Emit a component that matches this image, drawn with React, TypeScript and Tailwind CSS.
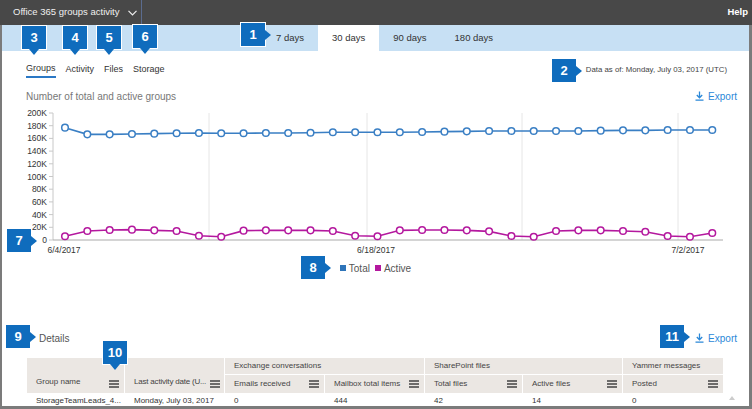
import React from 'react';

const total = [176.9, 166.4, 166.4, 166.9, 167.5, 168, 168.5, 168, 168, 168.5, 168.5, 169, 169.6, 169.6, 169.6, 169.6, 170.1, 170.6, 171.1, 171.7, 171.7, 171.7, 171.7, 171.7, 172.2, 172.7, 172.7, 173.2, 173.2, 173.2];
const active = [5.8, 14.2, 15.7, 16.3, 15.2, 14.2, 6.8, 5.2, 14.7, 15.2, 15.2, 15.2, 14.2, 6.8, 5.8, 15.2, 15.7, 15.7, 15.2, 13.6, 6.3, 5.2, 14.2, 15.2, 15.2, 14.2, 13.1, 6.3, 5.2, 11.0];

const xAt = (i: number) => 65 + i * 22.32;
const yAt = (v: number) => 240 - v * 0.635;

// numbered callout boxes laid over the screenshot
function Callout({ n, left, top, dir }: { n: number; left: number; top: number; dir: 'right' | 'down' }) {
  return (
    <div
      className="absolute w-[26px] h-[25px] bg-[#0f6cbd] border border-white flex items-center justify-center text-white text-[13px] font-semibold"
      style={{ left, top }}
    >
      {n}
      {dir === 'right' ? (
        <div className="absolute right-[-6px] top-1/2 -translate-y-1/2 w-0 h-0 border-y-[5px] border-y-transparent border-l-[6px] border-l-[#0f6cbd]" />
      ) : (
        <div className="absolute bottom-[-6px] left-1/2 -translate-x-1/2 w-0 h-0 border-x-[5px] border-x-transparent border-t-[6px] border-t-[#0f6cbd]" />
      )}
    </div>
  );
}

function ExportLink() {
  return (
    <div className="flex items-center gap-[4px] text-[#2b88d8] text-[10px]">
      <svg width="9" height="10" viewBox="0 0 9 10">
        <path d="M4.5 0.5 V6.5 M1.8 4 L4.5 6.8 L7.2 4 M0.5 9.2 H8.5" stroke="#2b88d8" strokeWidth="1.3" fill="none" />
      </svg>
      <span>Export</span>
    </div>
  );
}

function Menu() {
  return (
    <svg width="10" height="8" viewBox="0 0 10 8" className="shrink-0">
      <path d="M0 1 H10 M0 4 H10 M0 7 H10" stroke="#444" strokeWidth="1.3" />
    </svg>
  );
}

function Chart() {
  const totalPts = total.map((v, i) => `${xAt(i)},${yAt(v)}`).join(' ');
  const activePts = active.map((v, i) => `${xAt(i)},${yAt(v)}`).join(' ');
  return (
    <svg width="747" height="153" viewBox="2 106 747 153" className="block">
      {[209, 367, 522, 678].map((x) => (
        <line key={x} x1={x} y1={113} x2={x} y2={240} stroke="#e6e6e6" strokeWidth="1" />
      ))}
      <line x1={53} y1={113} x2={53} y2={240} stroke="#c8c8c8" strokeWidth="1" />
      <line x1={53} y1={240} x2={723} y2={240} stroke="#aaa" strokeWidth="1" />
      {Array.from({ length: 11 }).map((_, k) => {
        const y = 240 - k * 12.7;
        return (
          <g key={k}>
            <line x1={49} y1={y} x2={53} y2={y} stroke="#c8c8c8" strokeWidth="1" />
            <text x={47} y={y + 3} textAnchor="end" fontSize="8.5" fill="#333">
              {k === 0 ? '0' : `${k * 20}K`}
            </text>
          </g>
        );
      })}
      <text x={64} y={253} textAnchor="middle" fontSize="8.5" fill="#333">6/4/2017</text>
      <text x={376} y={253} textAnchor="middle" fontSize="8.5" fill="#333">6/18/2017</text>
      <text x={688} y={253} textAnchor="middle" fontSize="8.5" fill="#333">7/2/2017</text>
      <polyline points={totalPts} fill="none" stroke="#3a7fc4" strokeWidth="1.6" />
      <polyline points={activePts} fill="none" stroke="#b4189e" strokeWidth="1.6" />
      {total.map((v, i) => (
        <circle key={'t' + i} cx={xAt(i)} cy={yAt(v)} r="3.3" fill="#fff" stroke="#3a7fc4" strokeWidth="1.5" />
      ))}
      {active.map((v, i) => (
        <circle key={'a' + i} cx={xAt(i)} cy={yAt(v)} r="3.3" fill="#fff" stroke="#b4189e" strokeWidth="1.5" />
      ))}
    </svg>
  );
}

const cols = [
  { label: 'Emails received', w: 'w-[100px]' },
  { label: 'Mailbox total items', w: 'w-[100px]' },
  { label: 'Total files', w: 'w-[98px]' },
  { label: 'Active files', w: 'w-[100px]' },
  { label: 'Posted', w: 'w-[100px]' },
];

function DetailsTable() {
  return (
    <div className="ml-[25px] w-[696px] text-[8px] text-[#444]">
      <div className="flex bg-[#ebe7e3]">
        <div className="w-[98px] h-[35px] flex items-end justify-between pl-[9px] pr-[5px] pb-[5px] border-r border-white">
          <span>Group name</span>
          <Menu />
        </div>
        <div className="w-[100px] h-[35px] flex items-end justify-between pl-[9px] pr-[4px] pb-[5px] border-r border-white">
          <span className="whitespace-nowrap tracking-[-0.2px]">Last activity date (U...</span>
          <Menu />
        </div>
        <div className="flex flex-col flex-1">
          <div className="flex h-[17px] border-b border-white">
            <div className="w-[200px] pl-[9px] flex items-center border-r border-white">Exchange conversations</div>
            <div className="w-[198px] pl-[9px] flex items-center border-r border-white">SharePoint files</div>
            <div className="flex-1 pl-[9px] flex items-center">Yammer messages</div>
          </div>
          <div className="flex h-[18px]">
            {cols.map((c, i) => (
              <div
                key={c.label}
                className={`${c.w} ${i < cols.length - 1 ? 'border-r border-white' : ''} flex items-center justify-between pl-[9px] pr-[5px]`}
              >
                <span className="whitespace-nowrap">{c.label}</span>
                <Menu />
              </div>
            ))}
          </div>
        </div>
      </div>
      <div className="flex h-[15px] items-center text-[#333]">
        <div className="w-[98px] pl-[9px]">StorageTeamLeads_4...</div>
        <div className="w-[100px] pl-[9px]">Monday, July 03, 2017</div>
        <div className="w-[100px] pl-[9px]">0</div>
        <div className="w-[100px] pl-[9px]">444</div>
        <div className="w-[98px] pl-[9px]">42</div>
        <div className="w-[100px] pl-[9px]">14</div>
        <div className="w-[100px] pl-[9px]">0</div>
      </div>
    </div>
  );
}

export default function App() {
  return (
    <div className="relative w-[752px] h-[409px] overflow-hidden bg-white font-['Liberation_Sans',Arial,sans-serif]">
      {/* top bar */}
      <div className="h-[25px] bg-[#484848] flex items-center justify-between text-white">
        <div className="h-full flex items-center gap-[8px] pl-[13px] pr-[4px] border-r border-[#5b6c8f]">
          <span className="text-[9.5px] text-[#f0f0f0]">Office 365 groups activity</span>
          <svg width="9" height="6" viewBox="0 0 9 6">
            <path d="M0.5 0.8 L4.5 4.8 L8.5 0.8" stroke="#eee" strokeWidth="1.2" fill="none" />
          </svg>
        </div>
        <span className="text-[9.5px] font-bold pr-[4px]">Help</span>
      </div>

      <div className="h-[384px] flex flex-col border-l-2 border-r-[3px] border-b-[3px] border-[#7b7b7b] overflow-hidden">
        {/* period tabs */}
        <div className="h-[26px] shrink-0 bg-[#c7e0f4] flex text-[9.5px] text-[#333] pl-[260px]">
          <div className="px-[14px] flex items-center">7 days</div>
          <div className="px-[14px] flex items-center bg-white">30 days</div>
          <div className="px-[14px] flex items-center">90 days</div>
          <div className="px-[14px] flex items-center">180 days</div>
        </div>

        {/* sub tabs */}
        <div className="mt-[10px] h-[17px] shrink-0 flex justify-between pl-[24px] pr-[22px]">
          <div className="flex gap-[10px] text-[9px] text-[#333]">
            <div className="flex items-center border-b-2 border-[#2b78c5]">Groups</div>
            <div className="flex items-center">Activity</div>
            <div className="flex items-center">Files</div>
            <div className="flex items-center">Storage</div>
          </div>
          <div className="flex items-center text-[7.8px] text-[#444]">Data as of: Monday, July 03, 2017 (UTC)</div>
        </div>

        {/* chart header */}
        <div className="mt-[11px] h-[14px] shrink-0 flex items-center justify-between pl-[24px] pr-[12px]">
          <span className="text-[10px] text-[#777]">Number of total and active groups</span>
          <ExportLink />
        </div>

        <div className="mt-[3px] shrink-0">
          <Chart />
        </div>

        {/* legend */}
        <div className="h-[18px] shrink-0 flex items-center justify-center gap-[5px] text-[10px] text-[#555]">
          <div className="flex items-center gap-[3px]">
            <div className="w-[6px] h-[6px] bg-[#2e74b9]" />
            <span>Total</span>
          </div>
          <div className="flex items-center gap-[3px]">
            <div className="w-[6px] h-[6px] bg-[#b4189e]" />
            <span>Active</span>
          </div>
        </div>

        {/* details */}
        <div className="mt-[53px] h-[16px] shrink-0 flex items-center justify-between pl-[37px] pr-[12px]">
          <span className="text-[10px] text-[#555]">Details</span>
          <ExportLink />
        </div>

        <div className="mt-[12px] shrink-0 relative">
          <DetailsTable />
          <svg width="6" height="4" viewBox="0 0 6 4" className="absolute left-[727px] top-[38px]">
            <path d="M0 4 L3 0 L6 4 Z" fill="#ccc" />
          </svg>
        </div>
      </div>

      <Callout n={1} left={240} top={22} dir="right" />
      <Callout n={2} left={551} top={58} dir="right" />
      <Callout n={3} left={21} top={25} dir="down" />
      <Callout n={4} left={62} top={25} dir="down" />
      <Callout n={5} left={96} top={25} dir="down" />
      <Callout n={6} left={132} top={24} dir="down" />
      <Callout n={7} left={6} top={228} dir="right" />
      <Callout n={8} left={300} top={255} dir="right" />
      <Callout n={9} left={5} top={324} dir="right" />
      <Callout n={10} left={102} top={340} dir="down" />
      <Callout n={11} left={659} top={324} dir="right" />
    </div>
  );
}
